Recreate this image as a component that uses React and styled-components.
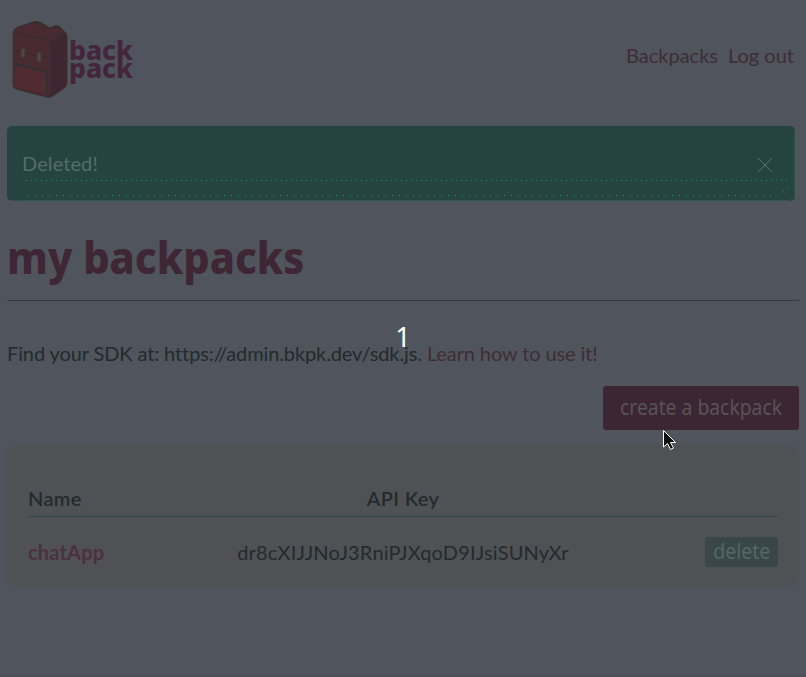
import React from 'react';
import styled, { createGlobalStyle } from 'styled-components';

const Global = createGlobalStyle`
  * { box-sizing: border-box; }
  body { margin: 0; background: #50545c; font-family: Lato, sans-serif; font-size: 20px; color: #222b2c; overflow: hidden; }
  a { color: inherit; text-decoration: none; }
`;
const Page = styled.div`
  position: relative;
  height: 677px;
  padding: 0 7px;
  border-bottom: 3px solid #4e5055;
`;
const Header = styled.header`
  height: 126px;
  display: flex;
  justify-content: space-between;
  padding: 20px 5px 0 5px;
`;
const Logo = styled.svg`
  width: 122px;
  height: 80px;
  display: block;
`;
const Wordmark = styled.text`
  font-family: 'Noto Sans', sans-serif;
  font-size: 27px;
  font-weight: 800;
  fill: #43263a;
`;
const Nav = styled.nav`
  display: flex;
  gap: 10px;
  padding-top: 23px;
  line-height: 24px;
  color: #3e2d37;
`;
const Alert = styled.div`
  position: relative;
  width: 788px;
  height: 75px;
  border-radius: 5px;
  background: #254441;
  color: #556c69;
  display: flex;
  justify-content: space-between;
  padding: 25px 22px 0 15px;
  line-height: 24px;
  letter-spacing: 0.1px;
`;
const Close = styled.svg`
  width: 16px;
  height: 16px;
  margin-top: 6px;
  stroke: #56706c;
`;
const Dots = styled.svg`
  position: absolute;
  left: 0;
  top: 0;
  width: 788px;
  height: 80px;
  overflow: visible;
  fill: none;
  stroke: #1b9878;
`;
const Title = styled.h1`
  margin: 0;
  height: 100px;
  width: 792px;
  padding-top: 26px;
  border-bottom: 1px solid #343c43;
  color: #3e2634;
  font: 800 45px/60px 'Noto Sans', sans-serif;
  white-space: nowrap;
`;
const TitleText = styled.span`
  display: inline-block;
  transform: scaleX(0.922);
  transform-origin: left center;
`;
const Sdk = styled.p`
  margin: 0;
  padding-top: 40px;
  line-height: 24px;
  height: 85px;
  white-space: nowrap;
  letter-spacing: -0.11px;
`;
const Learn = styled.a`
  && { color: #3e2d37; }
`;
const Actions = styled.div`
  display: flex;
  width: 792px;
  justify-content: flex-end;
`;
const Button = styled.button`
  border: 0;
  padding: 0 0 2px;
  border-radius: 3px;
  width: ${(p) => (p.$small ? 73 : 196)}px;
  height: ${(p) => (p.$small ? 30 : 44)}px;
  background: ${(p) => (p.$small ? '#3a4748' : '#3c2633')};
  color: ${(p) => (p.$small ? '#536765' : '#585358')};
  font-family: 'Noto Sans', sans-serif;
  font-size: 21px;
  white-space: nowrap;
  display: flex;
  align-items: center;
  justify-content: center;
`;
const Label = styled.span`
  display: block;
  transform: scaleX(${(p) => p.$scale});
`;
const Card = styled.section`
  margin-top: 15px;
  width: 792px;
  height: 142px;
  border-radius: 10px;
  background: #505155;
  padding: 35px 21px 0;
`;
const Row = styled.div`
  display: grid;
  grid-template-columns: 209px 1fr 209px;
  align-items: center;
  height: ${(p) => (p.$head ? 37 : 70)}px;
  font-weight: ${(p) => (p.$head ? 600 : 400)};
  letter-spacing: ${(p) => (p.$head ? 0.35 : 0.18)}px;
  border-bottom: ${(p) => (p.$head ? '1px solid #2d4847' : '0')};
`;
const Cell = styled.div`
  display: flex;
  justify-content: ${(p) => p.$align || 'flex-start'};
  white-space: nowrap;
`;
const AppLink = styled.a`
  && { color: #4b303e; font-weight: 700; }
`;
const Count = styled.div`
  position: absolute;
  left: 0;
  right: 0;
  top: 319px;
  text-align: center;
  font: 27px/36px 'Noto Sans', sans-serif;
  color: #fff;
`;
const Cursor = styled.svg`
  position: absolute;
  left: 662px;
  top: 429px;
  width: 15px;
  height: 22px;
`;

export default function App() {
  return (
    <Page>
      <Global />
      <Header>
        <Logo viewBox="0 0 122 80">
          <path d="M1 12 Q1 9 6 7 L18 3 Q25 -1 33 5 L38 8 Q46 3 50 9 L53 12 Q55 13 55 17 V62 Q55 66 52 68 L41 76 Q38 78 34 77 L4 69 Q1 68 1 65Z" fill="#482b31" stroke="#3b3034" strokeWidth="1" />
          <path d="M39 22 L53 12 Q55 14 55 17 V62 Q55 66 52 68 L39 77Z" fill="#3e2730" />
          <path d="M1 12 L35 20 Q39 21 39 26 V77 M39 20 L52 12 M19 4 Q28 1 33 6 V10 M39 8 Q47 5 50 10" fill="none" stroke="#302d33" />
          <path d="M4 31 L36 38" fill="none" stroke="#38292f" />
          <path d="M4 45 L34 52 V74 L2 67Z" fill="#502b32" />
          <path d="M4 44 L31 51 Q35 52 35 56 V74" fill="none" stroke="#303036" strokeWidth="2" />
          <path d="M9 28 l4 1 v9 l-4 -1z M25 32 l4 1 v9 l-4 -1z" fill="#57463c" stroke="#37383a" />
          <Wordmark x="57" y="40" textLength="64" lengthAdjust="spacingAndGlyphs">back</Wordmark>
          <Wordmark x="57" y="58" textLength="64" lengthAdjust="spacingAndGlyphs">pack</Wordmark>
        </Logo>
        <Nav><a href="#b">Backpacks</a><a href="#l">Log out</a></Nav>
      </Header>
      <Alert>
        <span>Deleted!</span>
        <Close viewBox="0 0 16 16"><path d="M1 1L15 15M15 1L1 15" /></Close>
        <Dots>
          <path d="M19 54.5H760L780 53.5" strokeDasharray="1 4" />
          <path d="M21 69.5H770L785 59.5" strokeDasharray="1 6" />
          <path d="M3 74.5H782L787.5 69V6" strokeDasharray="1 1" stroke="#3b625c" />
          <path d="M20 79.5H786" strokeDasharray="1 3" stroke="#46605e" />
        </Dots>
      </Alert>
      <Title><TitleText>my backpacks</TitleText></Title>
      <Sdk>Find your SDK at: https://admin.bkpk.dev/sdk.js. <Learn href="#learn">Learn how to use it!</Learn></Sdk>
      <Actions><Button><Label $scale={0.92}>create a backpack</Label></Button></Actions>
      <Card>
        <Row $head>
          <Cell>Name</Cell><Cell $align="center">API Key</Cell><Cell />
        </Row>
        <Row>
          <Cell><AppLink href="#chat">chatApp</AppLink></Cell>
          <Cell $align="center">dr8cXIJJNoJ3RniPJXqoD9IJsiSUNyXr</Cell>
          <Cell $align="flex-end"><Button $small><Label $scale={0.93}>delete</Label></Button></Cell>
        </Row>
      </Card>
      <Count>1</Count>
      <Cursor viewBox="0 0 15 22"><path d="M1.5 1.5V18L5.5 14.5L8.5 20.5L11.5 19L8.5 13.5H13.5Z" fill="#111" stroke="#fff" /></Cursor>
    </Page>
  );
}
